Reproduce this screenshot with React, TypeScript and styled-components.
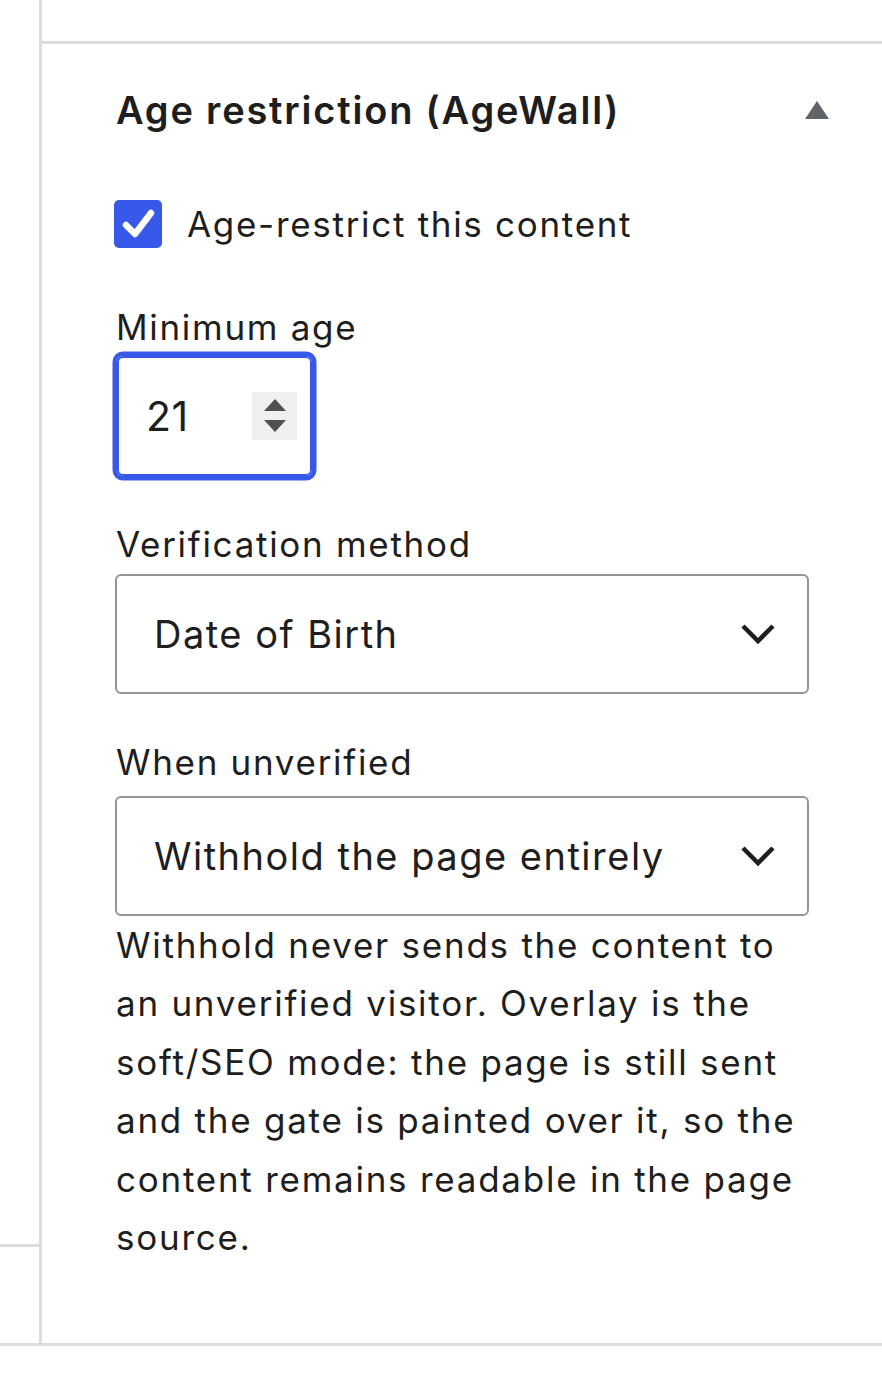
import * as React from 'react'
import styled, { createGlobalStyle } from 'styled-components'

const GlobalStyle = createGlobalStyle`
  html, body {
    margin: 0;
    padding: 0;
    background: #fff;
  }
  body {
    font-family: Inter, "Noto Sans", "Liberation Sans", sans-serif;
    color: #1e1e1e;
    -webkit-font-smoothing: antialiased;
  }
  * { box-sizing: border-box; }
`

const Layout = styled.div`
  display: flex;
  width: 882px;
  height: 1346px;
  border-bottom: 3px solid #dddddd;
`

const Rail = styled.div`
  width: 42px;
  flex-shrink: 0;
  border-right: 3px solid #dddddd;
`

const RailBlock = styled.div`
  height: 1247px;
  border-bottom: 3px solid #dddddd;
`

const Sidebar = styled.div`
  flex: 1;
  display: flex;
  flex-direction: column;
`

const PrevPanel = styled.div`
  height: 44px;
  border-bottom: 3px solid #dddddd;
`

const Panel = styled.section`
  padding: 42px 73px 0 73px;
`

const PanelHeader = styled.div`
  display: flex;
  align-items: center;
  justify-content: space-between;
  height: 48px;
  padding-left: 1px;
`

const PanelTitle = styled.h2`
  margin: 0;
  font-size: 38px;
  font-weight: 600;
  line-height: 48px;
  letter-spacing: 1.8px;
`

const ToggleIcon = styled.svg`
  width: 24px;
  height: 18px;
  margin-right: -20px;
  display: block;
`

const CheckRow = styled.label`
  display: flex;
  align-items: center;
  gap: 25px;
  height: 48px;
  margin-top: 66px;
  margin-left: -1px;
  font-size: 35px;
  line-height: 48px;
  letter-spacing: 1.7px;
`

const CheckBox = styled.span`
  width: 48px;
  height: 48px;
  border-radius: 5px;
  background: #3858e9;
  display: flex;
  align-items: center;
  justify-content: center;
  flex-shrink: 0;
`

const Field = styled.div<{ $top: number }>`
  display: flex;
  flex-direction: column;
  margin-top: ${p => p.$top}px;
`

const FieldLabel = styled.label<{ $gap: number }>`
  font-size: 35px;
  line-height: 44px;
  letter-spacing: 1.7px;
  padding-left: 1px;
  margin-bottom: ${p => p.$gap}px;
`

const NumberBox = styled.div`
  display: flex;
  align-items: center;
  width: 195px;
  height: 120px;
  margin-left: 2px;
  border: 2px solid #3858e9;
  border-radius: 6px;
  box-shadow: 0 0 0 4.5px #3858e9;
  padding: 0 13px 0 27px;
`

const NumberValue = styled.input`
  flex: 1;
  min-width: 0;
  border: 0;
  outline: 0;
  padding: 0;
  background: transparent;
  font-family: inherit;
  font-size: 41px;
  letter-spacing: 0.5px;
  color: #1e1e1e;
`

const Spinner = styled.span`
  width: 45px;
  height: 48px;
  background: #efefef;
  display: flex;
  align-items: center;
  justify-content: center;
  flex-shrink: 0;
`

const SelectBox = styled.div`
  display: flex;
  align-items: center;
  justify-content: space-between;
  height: 120px;
  border: 2.5px solid #949494;
  border-radius: 6px;
  padding: 0 31px 0 37px;
  font-size: 38px;
  letter-spacing: 1.5px;
`

const Chevron = styled.svg`
  width: 36px;
  height: 22px;
  display: block;
`

const Help = styled.p`
  margin: 0;
  padding-left: 1px;
  font-size: 35px;
  line-height: 58.4px;
  letter-spacing: 1.75px;
`

const Check = () => (
  <svg width="36" height="32" viewBox="0 0 36 32">
    <polyline points="6,17 15,26 31,5" fill="none" stroke="#fff" strokeWidth="6.5" strokeLinecap="round" strokeLinejoin="round" />
  </svg>
)

const ChevronDown = () => (
  <Chevron viewBox="0 0 36 22">
    <polyline points="3,3 18,18 33,3" fill="none" stroke="#1e1e1e" strokeWidth="4.5" />
  </Chevron>
)

const Select = ({ value }: { value: string }) => (
  <SelectBox>
    <span>{value}</span>
    <ChevronDown />
  </SelectBox>
)

export default function App() {
  return (
    <>
      <GlobalStyle />
      <Layout>
        <Rail>
          <RailBlock />
        </Rail>
        <Sidebar>
          <PrevPanel />
          <Panel>
            <PanelHeader>
              <PanelTitle>Age restriction (AgeWall)</PanelTitle>
              <ToggleIcon viewBox="0 0 24 18">
                <polygon points="12,0 24,18 0,18" fill="#5f6469" />
              </ToggleIcon>
            </PanelHeader>

            <CheckRow>
              <CheckBox><Check /></CheckBox>
              <span>Age-restrict this content</span>
            </CheckRow>

            <Field $top={57}>
              <FieldLabel $gap={7}>Minimum age</FieldLabel>
              <NumberBox>
                <NumberValue type="text" defaultValue="21" />
                <Spinner>
                  <svg width="22" height="34" viewBox="0 0 22 34">
                    <polygon points="11,0 22,12 0,12" fill="#505050" />
                    <polygon points="0,21 22,21 11,33" fill="#505050" />
                  </svg>
                </Spinner>
              </NumberBox>
            </Field>

            <Field $top={46}>
              <FieldLabel $gap={8}>Verification method</FieldLabel>
              <Select value="Date of Birth" />
            </Field>

            <Field $top={46}>
              <FieldLabel $gap={12}>When unverified</FieldLabel>
              <Select value="Withhold the page entirely" />
              <Help>
                Withhold never sends the content to an unverified visitor. Overlay is the soft/SEO mode: the page is still sent and the gate is painted over it, so the content remains readable in the page source.
              </Help>
            </Field>
          </Panel>
        </Sidebar>
      </Layout>
    </>
  )
}
